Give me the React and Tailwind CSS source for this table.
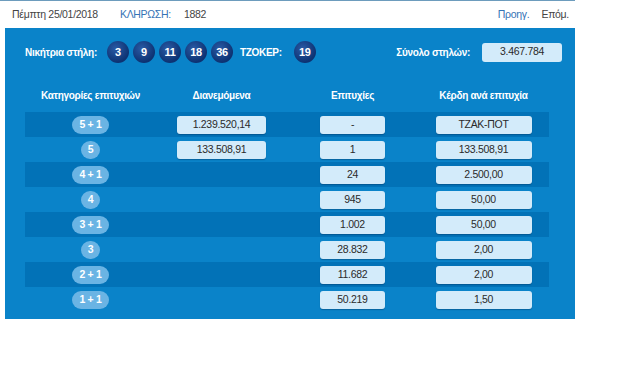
import React from "react";

const rows = [
  { cat: "5 + 1", dist: "1.239.520,14", wins: "-", prize: "ΤΖΑΚ-ΠΟΤ" },
  { cat: "5", dist: "133.508,91", wins: "1", prize: "133.508,91" },
  { cat: "4 + 1", dist: "", wins: "24", prize: "2.500,00" },
  { cat: "4", dist: "", wins: "945", prize: "50,00" },
  { cat: "3 + 1", dist: "", wins: "1.002", prize: "50,00" },
  { cat: "3", dist: "", wins: "28.832", prize: "2,00" },
  { cat: "2 + 1", dist: "", wins: "11.682", prize: "2,00" },
  { cat: "1 + 1", dist: "", wins: "50.219", prize: "1,50" },
];

const numbers = ["3", "9", "11", "18", "36"];

const Ball = ({ n }) => (
  <div className="w-[22px] h-[22px] rounded-full flex items-center justify-center text-white font-bold text-[11px] bg-[radial-gradient(circle_at_40%_35%,#2a5ba6,#0d3272_70%)]">
    {n}
  </div>
);

const Box = ({ w, children }) => (
  <div
    className={`${w} h-[18px] rounded-[3px] bg-[#d3ebfa] shadow-[0_1px_1px_rgba(0,40,80,0.35)] flex items-center justify-center text-[10.5px] text-[#2a2a2a]`}
  >
    {children}
  </div>
);

export default function App() {
  return (
    <div className="w-[575px] font-['Liberation_Sans',Arial,sans-serif] tracking-[-0.3px] border-t border-[#6d9cbd]">
      {/* top bar */}
      <div className="h-[27px] flex items-center pl-[12px] pr-[6px] text-[10.5px] text-[#444]">
        <span>Πέμπτη 25/01/2018</span>
        <span className="ml-[22px] text-[#3573b5]">ΚΛΗΡΩΣΗ:</span>
        <span className="ml-[13px]">1882</span>
        <span className="ml-auto text-[#3573b5]">Προηγ.</span>
        <span className="ml-[12px]">Επόμ.</span>
      </div>

      {/* blue panel */}
      <div className="ml-[5px] w-[570px] h-[291px] bg-[#0a83c9] pt-[13px]">
        <div className="h-[22px] flex items-center pl-[20px] pr-[13px] text-white font-bold text-[10px]">
          <span>Νικήτρια στήλη:</span>
          <div className="ml-[10px] flex gap-[4px]">
            {numbers.map((n) => (
              <Ball key={n} n={n} />
            ))}
          </div>
          <span className="ml-[7px]">ΤΖΟΚΕΡ:</span>
          <div className="ml-[12px]">
            <Ball n="19" />
          </div>
          <span className="ml-auto">Σύνολο στηλών:</span>
          <div className="ml-[12px] w-[80px] h-[19px] rounded-[3px] bg-[#d3ebfa] flex items-center justify-center font-normal text-[10.5px] text-[#2a2a2a]">
            3.467.784
          </div>
        </div>

        <div className="ml-[20px] w-[524px] mt-[24px] h-[16px] grid grid-cols-4 items-center text-center text-white font-bold text-[10px]">
          <span>Κατηγορίες επιτυχιών</span>
          <span>Διανεμόμενα</span>
          <span>Επιτυχίες</span>
          <span>Κέρδη ανά επιτυχία</span>
        </div>

        <div className="ml-[20px] w-[524px] mt-[9px]">
          {rows.map((r, i) => (
            <div
              key={r.cat}
              className={`h-[25px] grid grid-cols-4 items-center ${i % 2 === 0 ? "bg-[#0272b7]" : ""}`}
            >
              <div className="flex justify-center">
                <div className="min-w-[18px] h-[18px] px-[7px] rounded-full bg-[#6ab4e4] flex items-center justify-center text-white font-bold text-[10.5px]">
                  {r.cat}
                </div>
              </div>
              <div className="flex justify-center">
                {r.dist && <Box w="w-[89px]">{r.dist}</Box>}
              </div>
              <div className="flex justify-center">
                <Box w="w-[65px]">{r.wins}</Box>
              </div>
              <div className="flex justify-center">
                <Box w="w-[96px]">{r.prize}</Box>
              </div>
            </div>
          ))}
        </div>
      </div>
    </div>
  );
}
